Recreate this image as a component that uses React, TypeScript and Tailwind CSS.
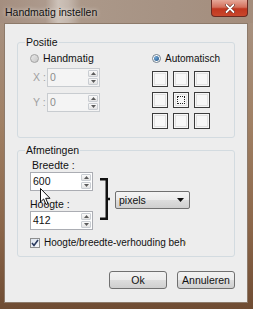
import React from "react";

const font = { fontFamily: "'Liberation Sans', Arial, sans-serif" };

function Spinner() {
  return (
    <div className="flex flex-col w-[10px] h-full gap-[1px] py-[1px] mr-[1px]">
      <div className="flex-1 flex items-center justify-center border border-[#c9cdd2] rounded-[1px] bg-gradient-to-b from-[#fbfbfb] to-[#e3e3e3]">
        <svg width="5" height="3" viewBox="0 0 5 3"><path d="M0 3 L2.5 0 L5 3 Z" fill="#5b5b5b" /></svg>
      </div>
      <div className="flex-1 flex items-center justify-center border border-[#c9cdd2] rounded-[1px] bg-gradient-to-b from-[#fbfbfb] to-[#e3e3e3]">
        <svg width="5" height="3" viewBox="0 0 5 3"><path d="M0 0 L2.5 3 L5 0 Z" fill="#5b5b5b" /></svg>
      </div>
    </div>
  );
}

function NumInput({ value, disabled, width }: { value: string; disabled?: boolean; width: string }) {
  return (
    <div
      className={
        "h-[19px] flex items-stretch border " +
        width +
        (disabled ? " border-[#c8ccd0] bg-[#f4f4f4]" : " border-[#abadb3] bg-white")
      }
    >
      <div className={"flex-1 pl-[2px] text-[10.5px] leading-[17px] " + (disabled ? "text-[#8d8d8d]" : "text-[#111]")}>{value}</div>
      <Spinner />
    </div>
  );
}

function Square({ focus }: { focus?: boolean }) {
  return (
    <div className="w-[16px] h-[16px] border border-[#3c3c3c] bg-[#f7f7f7] p-[1px]">
      <div className="w-full h-full border border-[#e2e2e2] p-[1px]">
        {focus && <div className="w-full h-full border border-dotted border-[#222]" />}
      </div>
    </div>
  );
}

export default function App() {
  return (
    <div
      className="relative w-[253px] h-[309px] overflow-hidden flex flex-col bg-[linear-gradient(180deg,#a99586_0%,#a08064_40%,#8a6548_75%,#6f4c33_100%)]"
      style={font}
    >
      {/* title bar */}
      <div className="h-[23px] flex items-start justify-between pl-[5px] pr-[5px] bg-[linear-gradient(90deg,#a48e7f_0%,#ad9a8d_18%,#cdc2b9_23%,#c4b7ad_27%,#ab9889_32%,#a69283_70%,#a48d7c_100%)]">
        <div className="pt-[5px] text-[10.5px] leading-[15px] text-[#111] [text-shadow:0_0_4px_rgba(255,255,255,0.8)]">
          Handmatig instellen
        </div>
        <div className="w-[37px] h-[17px] rounded-b-[4px] border border-t-0 border-[#6b2a22] bg-[linear-gradient(180deg,#e6a899_0%,#d4705c_45%,#c0361f_55%,#c9472c_100%)] flex items-center justify-center">
          <svg width="10" height="9" viewBox="0 0 10 9">
            <path d="M1.5 1 L8.5 8 M8.5 1 L1.5 8" stroke="#5a1a10" strokeWidth="3" strokeLinecap="round" />
            <path d="M1.5 1 L8.5 8 M8.5 1 L1.5 8" stroke="#ffffff" strokeWidth="1.8" strokeLinecap="round" />
          </svg>
        </div>
      </div>

      {/* client */}
      <div className="ml-[4px] mr-[5px] h-[280px] border border-[#8d7a6a] bg-[#ededed] flex flex-col">
        {/* Positie */}
        <fieldset className="mt-[11px] mx-[12px] border border-[#d3dbe0] rounded-[3px] pl-[7px] pb-[8px]">
          <legend className="px-[1px] text-[10.5px] leading-[15px] text-[#111]">Positie</legend>
          <div className="pl-[5px] flex">
            <div className="w-[122px] flex flex-col">
              <div className="mt-[1px] h-[15px] flex items-center gap-[4px]">
                <div className="w-[9px] h-[9px] rounded-full border border-[#a2a2a2] bg-gradient-to-br from-[#e8e8e8] to-[#c8c8c8]" />
                <span className="text-[10.5px] leading-[15px] text-[#111]">Handmatig</span>
              </div>
              <div className="mt-[2px] flex items-center">
                <span className="w-[17px] pl-[3px] text-[10.5px] text-[#a0a0a0]">X :</span>
                <NumInput value="0" disabled width="w-[53px]" />
              </div>
              <div className="mt-[6px] flex items-center">
                <span className="w-[17px] pl-[3px] text-[10.5px] text-[#a0a0a0]">Y :</span>
                <NumInput value="0" disabled width="w-[53px]" />
              </div>
            </div>
            <div className="flex flex-col">
              <div className="mt-[1px] h-[15px] flex items-center gap-[4px]">
                <div className="w-[9px] h-[9px] rounded-full border border-[#6f7f8c] bg-white flex items-center justify-center">
                  <div className="w-[5px] h-[5px] rounded-full bg-[radial-gradient(circle_at_35%_35%,#6fa6d6,#1b4d80)]" />
                </div>
                <span className="text-[10px] leading-[15px] text-[#111]">Automatisch</span>
              </div>
              <div className="mt-[5px] grid grid-cols-[16px_16px_16px] gap-x-[5px] gap-y-[5px]">
                <Square />
                <Square />
                <Square />
                <Square />
                <Square focus />
                <Square />
                <Square />
                <Square />
                <Square />
              </div>
            </div>
          </div>
        </fieldset>

        {/* Afmetingen */}
        <fieldset className="mt-[5px] mx-[12px] border border-[#d3dbe0] rounded-[3px] pl-[7px] pb-[6px]">
          <legend className="px-[1px] text-[10.5px] leading-[15px] text-[#111]">Afmetingen</legend>
          <div className="pl-[5px] flex flex-col">
            <div className="flex items-start">
              <div className="flex flex-col">
                <span className="mt-[1px] pl-[2px] text-[10.5px] leading-[13px] text-[#111]">Breedte :</span>
                <NumInput value="600" width="w-[63px]" />
                <span className="mt-[7px] text-[10.5px] leading-[13px] text-[#111]">Hoogte :</span>
                <NumInput value="412" width="w-[63px]" />
              </div>
              <svg className="ml-[7px] mt-[20px]" width="10" height="42" viewBox="0 0 10 42">
                <path d="M0 1.25 H6.75 V40.75 H0 M6.75 21 H10" stroke="#111" strokeWidth="2.5" fill="none" />
              </svg>
              <div className="ml-[5px] mt-[33px] w-[75px] h-[18px] border border-[#707070] rounded-[2px] bg-[linear-gradient(180deg,#f4f4f4_0%,#ebebeb_50%,#dddddd_51%,#cfcfcf_100%)] flex items-center justify-between pl-[3px] pr-[5px]">
                <span className="text-[10.5px] leading-[14px] text-[#111]">pixels</span>
                <svg width="7" height="4" viewBox="0 0 7 4"><path d="M0 0 L3.5 4 L7 0 Z" fill="#111" /></svg>
              </div>
            </div>
            <div className="mt-[5px] h-[15px] flex items-center gap-[4px] overflow-hidden w-[156px] whitespace-nowrap">
              <div className="shrink-0 w-[10px] h-[10px] border border-[#8e8f8f] bg-gradient-to-br from-[#dde4ee] to-[#f6f8fb] flex items-center justify-center">
                <svg width="8" height="8" viewBox="0 0 8 8"><path d="M1 4 L3 6.5 L7 1" stroke="#2a3a5e" strokeWidth="1.6" fill="none" /></svg>
              </div>
              <span className="text-[10px] leading-[15px] text-[#111]">Hoogte/breedte-verhouding behouden</span>
            </div>
          </div>
        </fieldset>

        {/* buttons */}
        <div className="mt-[14px] mr-[12px] flex justify-end gap-[10px]">
          <button className="w-[58px] h-[18px] border border-[#707070] rounded-[3px] bg-[linear-gradient(180deg,#f2f2f2_0%,#ebebeb_50%,#dddddd_51%,#cfcfcf_100%)] text-[10.5px] leading-[14px] text-[#111]">
            Ok
          </button>
          <button className="w-[58px] h-[18px] border border-[#707070] rounded-[3px] bg-[linear-gradient(180deg,#f2f2f2_0%,#ebebeb_50%,#dddddd_51%,#cfcfcf_100%)] text-[10.5px] leading-[14px] text-[#111]">
            Annuleren
          </button>
        </div>
      </div>

      {/* mouse cursor */}
      <svg className="absolute left-[40px] top-[188px]" width="12" height="18" viewBox="0 0 12 18">
        <path d="M0.5 0.5 L0.5 14 L3.6 11 L6 16.5 L8 15.6 L5.7 10.3 L10 10.3 Z" fill="#fff" stroke="#111" strokeWidth="1" strokeLinejoin="round" />
      </svg>
    </div>
  );
}
